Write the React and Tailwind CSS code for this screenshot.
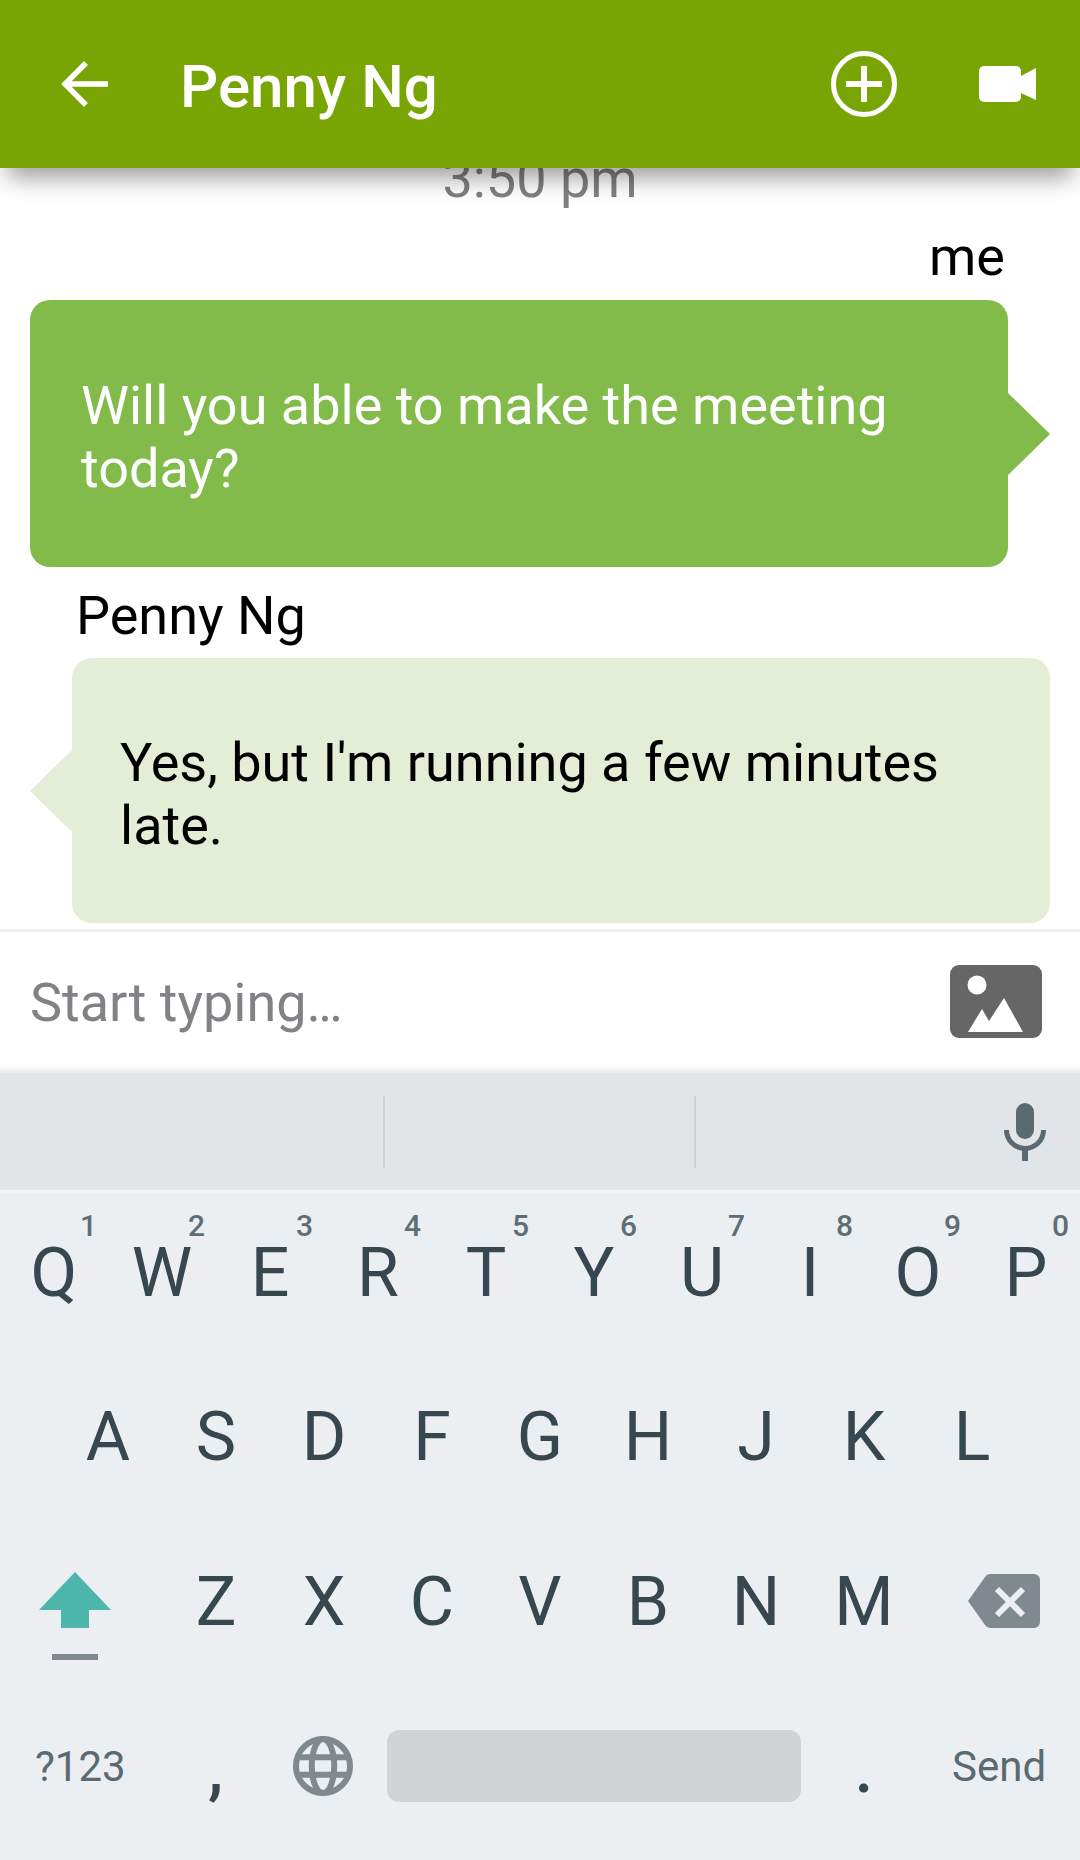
const rows = [
  ['Q', 'W', 'E', 'R', 'T', 'Y', 'U', 'I', 'O', 'P'],
  ['A', 'S', 'D', 'F', 'G', 'H', 'J', 'K', 'L'],
  ['Z', 'X', 'C', 'V', 'B', 'N', 'M'],
]
const hints = ['1', '2', '3', '4', '5', '6', '7', '8', '9', '0']

function Key({ children, hint }) {
  return (
    <div className="relative flex w-[108px] items-center justify-center pb-[4px] text-[68px] leading-none text-[#37474f]">
      {children}
      {hint && <span className="absolute right-[11px] top-[18px] text-[30px] font-medium leading-none text-[#5f6e76]">{hint}</span>}
    </div>
  )
}

function Header() {
  return (
    <header className="relative z-10 flex h-[168px] shrink-0 items-center bg-[#78a404] shadow-[0_18px_22px_-8px_rgba(0,0,0,0.38)]">
      <svg className="ml-[61px] h-[46px] w-[47px]" viewBox="0 0 47 46" fill="none" stroke="#fff" strokeWidth="5.5">
        <path d="M47 23H4M25 2 4 23l21 21" />
      </svg>
      <h1 className="ml-[72px] flex-1 pt-[5px] text-[60px] font-medium leading-none text-white">Penny Ng</h1>
      <svg className="h-[66px] w-[66px]" viewBox="0 0 66 66" fill="none" stroke="#fff">
        <circle cx="33" cy="33" r="30.5" strokeWidth="5" />
        <path d="M33 15v36M15 33h36" strokeWidth="6" />
      </svg>
      <svg className="ml-[82px] mr-[44px] h-[36px] w-[57px]" viewBox="0 0 57 36" fill="#fff">
        <path d="M5 0h32a5 5 0 0 1 5 5v26a5 5 0 0 1-5 5H5a5 5 0 0 1-5-5V5a5 5 0 0 1 5-5ZM42 10 57 2v32l-15-7Z" />
      </svg>
    </header>
  )
}

function Chat() {
  return (
    <main className="flex h-[761px] shrink-0 flex-col overflow-hidden bg-white">
      <p className="-mt-[19px] text-center text-[54px] leading-[60px] text-[#808080]">3:50 pm</p>
      <p className="mr-[75px] mt-[18px] text-right text-[54px] leading-[60px] text-black">me</p>
      <div className="ml-[30px] mt-[13px] flex items-center">
        <div className="flex h-[267px] w-[978px] items-center rounded-[20px] bg-[#82bb49] pl-[51px] pr-[30px] pt-[6px] text-[54px] leading-[63px] text-white">
          <p>Will you able to make the meeting today?</p>
        </div>
        <svg className="h-[82px] w-[42px]" viewBox="0 0 42 82" fill="#82bb49"><path d="M0 0 42 41 0 82Z" /></svg>
      </div>
      <p className="ml-[76px] mt-[19px] text-[54px] leading-[60px] text-black">Penny Ng</p>
      <div className="ml-[30px] mt-[12px] flex items-center">
        <svg className="h-[82px] w-[42px]" viewBox="0 0 42 82" fill="#e4edd6"><path d="M42 0 0 41 42 82Z" /></svg>
        <div className="flex h-[265px] w-[978px] items-center rounded-[20px] bg-[#e4edd6] pl-[48px] pr-[30px] pt-[6px] text-[54px] leading-[63px] text-black">
          <p>Yes, but I'm running a few minutes late.</p>
        </div>
      </div>
    </main>
  )
}

function Composer() {
  return (
    <div className="flex h-[144px] shrink-0 items-center justify-between border-y-[3px] border-[#eeeeee] bg-white pl-[30px] pr-[38px] shadow-[inset_0_-6px_6px_-4px_rgba(0,0,0,0.06)]">
      <span className="pt-[3px] text-[54px] text-[#808285]">Start typing…</span>
      <svg className="h-[73px] w-[92px]" viewBox="0 0 92 73">
        <rect width="92" height="73" rx="9" fill="#666" />
        <circle cx="27" cy="20" r="9.5" fill="#fff" />
        <path d="M18 67 32 44l7 12 15-23 19 34Z" fill="#fff" />
      </svg>
    </div>
  )
}

function Keyboard() {
  return (
    <div className="flex flex-1 flex-col bg-[#eceff2]">
      <div className="flex h-[120px] shrink-0 items-center border-b-[3px] border-[#f2f4f5] bg-[#e2e5e8]">
        <div className="ml-[383px] h-[72px] w-[2px] bg-[#cdd1d4]" />
        <div className="ml-[309px] h-[72px] w-[2px] bg-[#cdd1d4]" />
        <svg className="ml-[308px] h-[58px] w-[42px]" viewBox="0 0 42 58">
          <rect x="12" y="0" width="18" height="36" rx="9" fill="#5a6a73" />
          <path d="M2.5 27a18.5 18.5 0 0 0 37 0" fill="none" stroke="#5a6a73" strokeWidth="5" />
          <path d="M21 44v14" stroke="#5a6a73" strokeWidth="6" />
        </svg>
      </div>

      <div className="flex h-[163px]">
        {rows[0].map((k, i) => <Key key={k} hint={hints[i]}>{k}</Key>)}
      </div>
      <div className="flex h-[165px] pl-[54px]">
        {rows[1].map(k => <Key key={k}>{k}</Key>)}
      </div>
      <div className="flex h-[165px]">
        <div className="flex w-[162px] flex-col items-center pr-[12px] pt-[51px]">
          <svg className="h-[56px] w-[72px]" viewBox="0 0 72 56" fill="#4db6ac"><path d="M36 0 72 38H50v18H22V38H0Z" /></svg>
          <div className="mt-[26px] h-[6px] w-[46px] bg-[#80898e]" />
        </div>
        {rows[2].map(k => <Key key={k}>{k}</Key>)}
        <div className="flex flex-1 items-center pb-[6px]">
          <svg className="ml-[50px] h-[54px] w-[72px]" viewBox="0 0 72 54">
            <path d="M22 0h44a6 6 0 0 1 6 6v42a6 6 0 0 1-6 6H22a6 6 0 0 1-5-3L0 27 17 3a6 6 0 0 1 5-3Z" fill="#80898e" />
            <path d="M29 15 55 41M55 15 29 41" stroke="#eceff2" strokeWidth="6" />
          </svg>
        </div>
      </div>
      <div className="flex h-[160px] items-center">
        <span className="ml-[35px] w-[150px] text-[42px] text-[#5a6a73]">?123</span>
        <span className="w-[61px] pt-[6px] text-center text-[68px] font-medium leading-none text-[#37474f]">,</span>
        <svg className="ml-[47px] h-[60px] w-[60px]" viewBox="0 0 24 24" fill="none" stroke="#80898e" strokeWidth="2.4">
          <circle cx="12" cy="12" r="10.8" />
          <ellipse cx="12" cy="12" rx="4.5" ry="10.8" />
          <path d="M2 8.5h20M2 15.5h20" />
        </svg>
        <div className="ml-[34px] h-[72px] w-[414px] rounded-[12px] bg-[#d0d4d7]" />
        <span className="w-[126px] pt-[6px] text-center text-[68px] font-medium leading-none text-[#37474f]">.</span>
        <span className="ml-[25px] text-[42px] text-[#5a6a73]">Send</span>
      </div>
    </div>
  )
}

export default function App() {
  return (
    <div className="flex h-[1860px] w-[1080px] flex-col overflow-hidden bg-white font-['Roboto',sans-serif]">
      <Header />
      <Chat />
      <Composer />
      <Keyboard />
    </div>
  )
}
